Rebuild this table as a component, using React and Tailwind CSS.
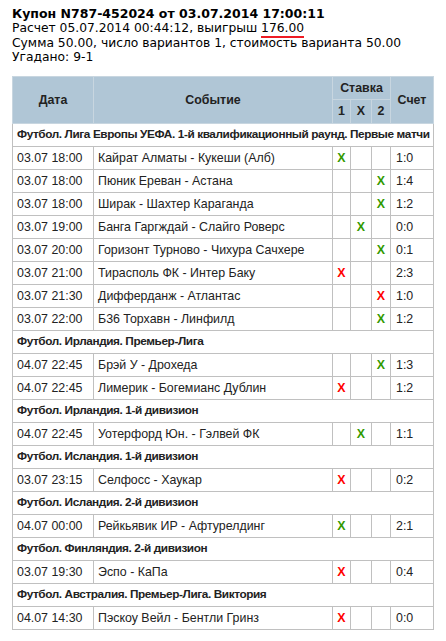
const sections = [
  {
    title: "Футбол. Лига Европы УЕФА. 1-й квалификационный раунд. Первые матчи",
    rows: [
      ["03.07 18:00", "Кайрат Алматы - Кукеши (Алб)", 0, true, "1:0"],
      ["03.07 18:00", "Пюник Ереван - Астана", 2, true, "1:4"],
      ["03.07 18:00", "Ширак - Шахтер Караганда", 2, true, "1:2"],
      ["03.07 19:00", "Банга Гаргждай - Слайго Роверс", 1, true, "0:0"],
      ["03.07 20:00", "Горизонт Турново - Чихура Сачхере", 2, true, "0:1"],
      ["03.07 21:00", "Тирасполь ФК - Интер Баку", 0, false, "2:3"],
      ["03.07 21:30", "Дифферданж - Атлантас", 2, false, "1:0"],
      ["03.07 22:00", "Б36 Торхавн - Линфилд", 2, true, "1:2"],
    ],
  },
  {
    title: "Футбол. Ирландия. Премьер-Лига",
    rows: [
      ["04.07 22:45", "Брэй У - Дрохеда", 2, true, "1:3"],
      ["04.07 22:45", "Лимерик - Богемианс Дублин", 0, false, "1:2"],
    ],
  },
  {
    title: "Футбол. Ирландия. 1-й дивизион",
    rows: [["04.07 22:45", "Уотерфорд Юн. - Гэлвей ФК", 1, true, "1:1"]],
  },
  {
    title: "Футбол. Исландия. 1-й дивизион",
    rows: [["03.07 23:15", "Селфосс - Хаукар", 0, false, "0:2"]],
  },
  {
    title: "Футбол. Исландия. 2-й дивизион",
    rows: [["04.07 00:00", "Рейкьявик ИР - Афтурелдинг", 0, true, "2:1"]],
  },
  {
    title: "Футбол. Финляндия. 2-й дивизион",
    rows: [["03.07 19:30", "Эспо - КаПа", 0, false, "0:4"]],
  },
  {
    title: "Футбол. Австралия. Премьер-Лига. Виктория",
    rows: [["04.07 14:30", "Пэскоу Вейл - Бентли Гринз", 0, false, "0:0"]],
  },
];

const td = "border border-[#c0c0c0] h-[23px] px-[4px] py-0";

function Pick({ col, pick, win }) {
  if (col !== pick) return <td className={td}></td>;
  return (
    <td className={td + " text-center font-bold " + (win ? "text-[#339900]" : "text-[#ff0000]")}>
      X
    </td>
  );
}

export default function App() {
  return (
    <div className="bg-white min-h-[641px] pt-[7px] px-[12px] text-black">
      <div className="font-['DejaVu_Sans',Verdana,sans-serif] text-[12.3px] leading-[14.3px]">
        <div className="font-bold text-[12.5px]">Купон N787-452024 от 03.07.2014 17:00:11</div>
        <div>
          Расчет 05.07.2014 00:44:12, выигрыш{" "}
          <span className="border-b-2 border-[#ee1c24] pb-[1px]">176.00</span>
        </div>
        <div>Сумма 50.00, число вариантов 1, стоимость варианта 50.00</div>
        <div>Угадано: 9-1</div>
      </div>

      <table className="mt-[12px] w-[422px] table-fixed border-collapse font-['Liberation_Sans',Arial,sans-serif] text-[12.4px] text-[#222]">
        <colgroup>
          <col className="w-[81px]" />
          <col />
          <col className="w-[18px]" />
          <col className="w-[21px]" />
          <col className="w-[19px]" />
          <col className="w-[43px]" />
        </colgroup>
        <thead>
          <tr className="bg-[#b0c6d6]">
            <th rowSpan={2} className="border border-[#c8d6e0] font-bold">Дата</th>
            <th rowSpan={2} className="border border-[#c8d6e0] font-bold">Событие</th>
            <th colSpan={3} className="border border-[#c8d6e0] h-[23px] font-bold">Ставка</th>
            <th rowSpan={2} className="border border-[#c8d6e0] font-bold">Счет</th>
          </tr>
          <tr className="bg-[#b0c6d6]">
            <th className="border border-[#c8d6e0] h-[24px] font-bold">1</th>
            <th className="border border-[#c8d6e0] font-bold">X</th>
            <th className="border border-[#c8d6e0] font-bold">2</th>
          </tr>
        </thead>
        <tbody>
          {sections.map((s) => [
            <tr key={s.title}>
              <td colSpan={6} className={td + " font-bold whitespace-nowrap text-[11.8px] tracking-[-0.4px]"}>
                {s.title}
              </td>
            </tr>,
            ...s.rows.map((r, i) => (
              <tr key={s.title + i}>
                <td className={td}>{r[0]}</td>
                <td className={td}>{r[1]}</td>
                <Pick col={0} pick={r[2]} win={r[3]} />
                <Pick col={1} pick={r[2]} win={r[3]} />
                <Pick col={2} pick={r[2]} win={r[3]} />
                <td className={td + " pl-[5px]"}>{r[4]}</td>
              </tr>
            )),
          ])}
        </tbody>
      </table>
    </div>
  );
}
